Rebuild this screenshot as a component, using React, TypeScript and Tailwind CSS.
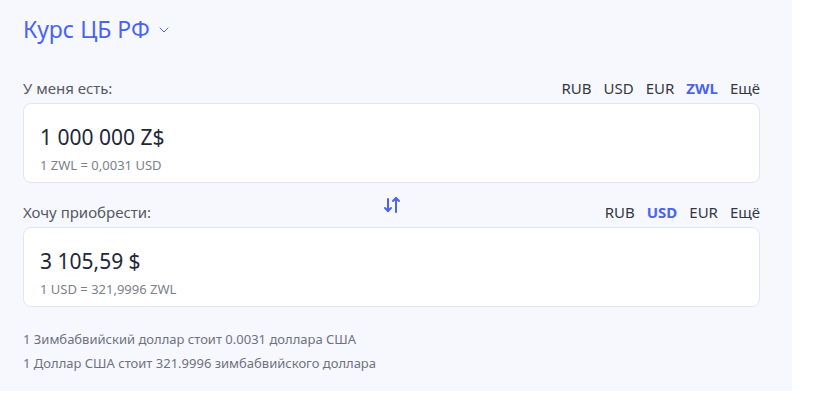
import { ChevronDown } from 'lucide-react';

const font = { fontFamily: '"Noto Sans", "Open Sans", sans-serif' };

function Tabs({ items, active }: { items: string[]; active: string }) {
  return (
    <div className="flex items-center justify-end gap-[12px] text-[15px] leading-[20px]">
      {items.map((t) => (
        <span
          key={t}
          className={t === active ? 'font-bold text-[#4a63f2]' : 'text-[#333845]'}
        >
          {t}
        </span>
      ))}
    </div>
  );
}

function AmountCard({ value, rate }: { value: string; rate: string }) {
  return (
    <div className="h-[80px] rounded-[8px] border border-[#e4e5f3] bg-white pl-[16px] pt-[18px]">
      <div className="text-[21px] leading-[30px] text-[#22263a]">{value}</div>
      <div className="mt-[5px] text-[13px] leading-[16px] text-[#7c7f8c]">{rate}</div>
    </div>
  );
}

function SwapIcon() {
  return (
    <svg width="18" height="18" viewBox="0 0 18 18" fill="none" stroke="#4a63f2" strokeWidth="2" strokeLinecap="round" strokeLinejoin="round">
      <path d="M5 3v12" />
      <path d="M2 12l3 3 3-3" />
      <path d="M13 16V2" />
      <path d="M10 5l3-3 3 3" />
    </svg>
  );
}

export default function App() {
  return (
    <div className="w-[815px] h-[403px] bg-white" style={font}>
      <div className="w-[792px] h-[391px] bg-[#f7f8fd] px-[23px] pt-[14px]">
        {/* заголовок */}
        <div className="flex items-center gap-[6px] h-[30px]">
          <span className="text-[23px] leading-[30px] text-[#4a63f2]">Курс ЦБ РФ</span>
          <ChevronDown size={16} color="#4a63f2" strokeWidth={1.5} className="mt-[2px]" />
        </div>

        <div className="w-[737px]">
          {/* у меня есть */}
          <div className="mt-[34px] mb-[5px] flex h-[20px] items-center justify-between">
            <span className="text-[15px] leading-[20px] text-[#555866]">У меня есть:</span>
            <Tabs items={['RUB', 'USD', 'EUR', 'ZWL', 'Ещё']} active="ZWL" />
          </div>
          <AmountCard value="1 000 000 Z$" rate="1 ZWL = 0,0031 USD" />

          {/* хочу приобрести */}
          <div className="mt-[19px] mb-[5px] grid h-[20px] grid-cols-[1fr_auto_1fr] items-center">
            <span className="text-[15px] leading-[20px] text-[#555866]">Хочу приобрести:</span>
            <div className="-translate-y-[7px]">
              <SwapIcon />
            </div>
            <Tabs items={['RUB', 'USD', 'EUR', 'Ещё']} active="USD" />
          </div>
          <AmountCard value="3 105,59 $" rate="1 USD = 321,9996 ZWL" />

          <div className="mt-[20px] text-[13px] leading-[24px] text-[#6e7180]">
            <div>1 Зимбабвийский доллар стоит 0.0031 доллара США</div>
            <div>1 Доллар США стоит 321.9996 зимбабвийского доллара</div>
          </div>
        </div>
      </div>
    </div>
  );
}
